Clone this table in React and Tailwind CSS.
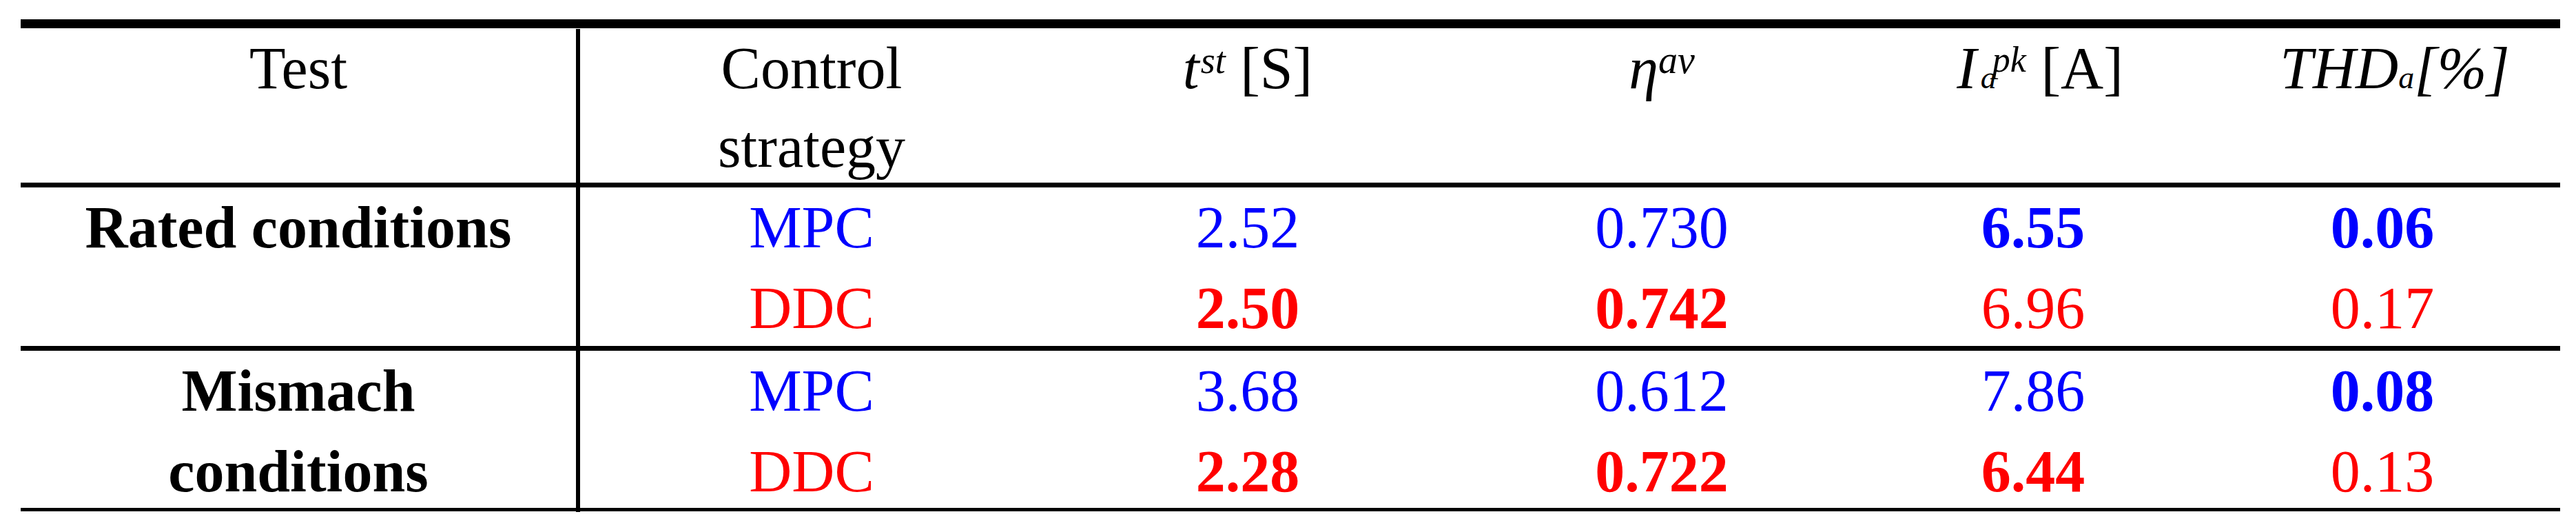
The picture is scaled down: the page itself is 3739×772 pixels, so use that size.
import React from "react"

// column widths follow the reference table (first column carries the vertical rule)
const cols = "grid grid-cols-[812px_658px_622px_580px_498px_516px]"

const BLUE = "text-[#0000ff]"
const RED = "text-[#ff0000]"

// heights include the bottom rule (border-box)
const groups = [
  {
    label: ["Rated conditions"],
    height: "h-[237px]",
    lines: [
      { name: "MPC", color: BLUE, vals: [["2.52", false], ["0.730", false], ["6.55", true], ["0.06", true]] },
      { name: "DDC", color: RED, vals: [["2.50", true], ["0.742", true], ["6.96", false], ["0.17", false]] },
    ],
  },
  {
    label: ["Mismach", "conditions"],
    height: "h-[228px]",
    lines: [
      { name: "MPC", color: BLUE, vals: [["3.68", false], ["0.612", false], ["7.86", false], ["0.08", true]] },
      { name: "DDC", color: RED, vals: [["2.28", true], ["0.722", true], ["6.44", true], ["0.13", false]] },
    ],
  },
]

function Header() {
  return (
    <div className={`${cols} h-[231px] pt-[1px] border-b-[7px] border-black leading-[114px] text-center`}>
      <div className="border-r-[6px] border-black">Test</div>
      <div className="pl-[14px]">
        <div>Control</div>
        <div>strategy</div>
      </div>
      <div>
        <span className="italic">t</span>
        <span className="italic text-[54px] leading-none align-[22px] ml-[2px]">st</span> [S]
      </div>
      <div>
        <span className="italic">η</span>
        <span className="italic text-[56px] leading-none align-[22px]">av</span>
      </div>
      <div className="pl-[20px]">
        <span className="italic">I</span>
        <span className="italic text-[46px] leading-none ml-[6px]">a</span>
        <span className="italic text-[52px] leading-none align-[24px] -ml-[6px]">pk</span> [A]
      </div>
      <div className="pl-[36px] italic">
        THD<span className="text-[46px] leading-none">a</span>[%]
      </div>
    </div>
  )
}

function Group({ g, last }) {
  return (
    <div className={`${cols} ${g.height} ${last ? "" : "border-b-[7px] border-black"} leading-[117px] text-center`}>
      <div className="border-r-[6px] border-black font-bold">
        {g.label.map((l) => (
          <div key={l}>{l}</div>
        ))}
      </div>
      <div className="pl-[14px]">
        {g.lines.map((ln) => (
          <div key={ln.name} className={ln.color}>
            {ln.name}
          </div>
        ))}
      </div>
      {[0, 1, 2, 3].map((ci) => (
        <div key={ci}>
          {g.lines.map((ln) => (
            <div key={ln.name} className={`${ln.color} ${ln.vals[ci][1] ? "font-bold" : ""}`}>
              {ln.vals[ci][0]}
            </div>
          ))}
        </div>
      ))}
    </div>
  )
}

export default function App() {
  return (
    <div className="w-[3739px] h-[772px] bg-white pt-[28px] pl-[30px] text-black text-[86px] font-['Liberation_Serif',serif]">
      <div className="w-[3686px] border-t-[13px] border-b-[5px] border-black">
        <Header />
        {groups.map((g, i) => (
          <Group key={i} g={g} last={i === groups.length - 1} />
        ))}
      </div>
    </div>
  )
}
